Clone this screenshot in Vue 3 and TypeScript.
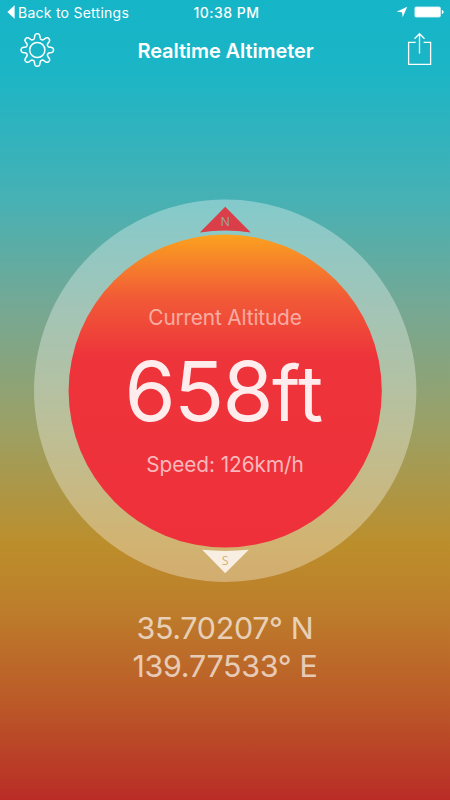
<script setup lang="ts">
const altitude = { value: '658', unit: 'ft' }
const speed = 'Speed: 126km/h'
const coordinates: string[] = ['35.70207° N', '139.77533° E']

// Closed outline of an eight-toothed gear, sampled around the hub.
function gearOutline(cx: number, cy: number): string {
  const points: string[] = []
  for (let i = 0; i < 360; i += 1) {
    const angle = (i * Math.PI) / 180
    const wave = Math.cos(8 * angle)
    const radius = 13.7 + 2.5 * Math.tanh(1.7 * wave) / Math.tanh(1.7)
    points.push(`${(cx + radius * Math.sin(angle)).toFixed(2)} ${(cy - radius * Math.cos(angle)).toFixed(2)}`)
  }
  return `M${points.join('L')}Z`
}
const gear = gearOutline(18.3, 18)
</script>

<template>
  <main class="screen">
    <div class="status">
      <div class="back">
        <svg width="8" height="14" viewBox="0 0 8 14"><path d="M.4 7 7.6.2v13.6z" fill="#fff" /></svg>
        <span class="back-label">Back to Settings</span>
      </div>
      <span class="clock">10:38 PM</span>
      <div class="indicators">
        <svg width="12" height="12" viewBox="0 0 12 12"><path d="M11.3.7 6.7 11.2 6 6.2.6 5.7z" fill="#fff" /></svg>
        <svg width="30" height="12" viewBox="0 0 30 12">
          <rect x=".4" y=".4" width="26.6" height="11.2" rx="2" fill="#fff" fill-opacity=".7" />
          <rect x="1.3" y="1.3" width="24.8" height="9.4" rx="1" fill="#fff" />
          <path d="M27.8 4c2.4.5 2.4 3.5 0 4z" fill="#fff" />
        </svg>
      </div>
    </div>
    <header class="nav">
      <button class="icon" aria-label="Settings">
        <svg width="36" height="36" viewBox="0 0 36 36" fill="none" stroke="#fff" stroke-width="1.5">
          <path :d="gear" />
          <circle cx="18.3" cy="18" r="7.6" />
        </svg>
      </button>
      <h1 class="title">Realtime Altimeter</h1>
      <button class="icon share" aria-label="Share">
        <svg width="26" height="36" viewBox="0 0 26 36" fill="none" stroke="#fff" stroke-width="1.3">
          <path d="M9.7 10.4H2.6v22h22v-22h-7M13.5 21.5V1.8M8.5 6.7l5-5 5 5" />
        </svg>
      </button>
    </header>
    <section class="dial">
      <svg class="face" viewBox="0 0 384 384" width="384" height="384">
        <defs>
          <linearGradient id="heat" x1="0" y1="0" x2="0" y2="1">
            <stop offset="0" stop-color="#fba21f" />
            <stop offset=".2" stop-color="#f15b36" />
            <stop offset=".39" stop-color="#ee343b" />
            <stop offset="1" stop-color="#ee303a" />
          </linearGradient>
        </defs>
        <circle cx="192.2" cy="191.8" r="191.2" fill="#fff" fill-opacity=".33" />
        <circle cx="192.2" cy="192" r="156.6" fill="url(#heat)" />
        <path d="M192.2 7.8 217.8 33.4Q192 29.5 166.8 33.4z" fill="#da3e48" />
        <path d="M169.2 350.8Q192 353 215.8 350.8L192.2 374.3z" fill="#f8efe2" />
        <text class="mark" x="192.2" y="27.4" fill="#a9a2a4">N</text>
        <text class="mark" x="192.2" y="366" fill="#d5b072">S</text>
      </svg>
      <div class="readout">
        <p class="caption">Current Altitude</p>
        <p class="altitude">{{ altitude.value }}<span class="unit">{{ altitude.unit }}</span></p>
        <p class="speed">{{ speed }}</p>
      </div>
    </section>
    <footer class="coordinates">
      <p v-for="line in coordinates" :key="line" class="coordinate">{{ line }}</p>
    </footer>
  </main>
</template>

<style>
body { margin: 0; }
</style>

<style scoped>
.screen {
  width: 450px;
  height: 800px;
  overflow: hidden;
  display: flex;
  flex-direction: column;
  color: #fff;
  font-family: Inter, "Liberation Sans", sans-serif;
  background: linear-gradient(#15b5c8 0, #1bb5c6 70px, #47b1b4 200px, #76a893 310px, #9ca064 430px, #bc8e2b 545px, #bd7d2b 610px, #bb5b28 700px, #b92c26 800px);
}
p, h1 { margin: 0; font-weight: 400; white-space: nowrap; }
.status {
  height: 24px;
  padding: 0 6px 0 7px;
  display: grid;
  grid-template-columns: 1fr auto 1fr;
  align-items: center;
}
.back { display: flex; align-items: center; gap: 3px; }
.back-label { font-size: 14px; letter-spacing: .25px; }
.clock { padding-left: 2px; font-size: 14px; font-weight: 500; letter-spacing: .45px; }
.indicators { display: flex; align-items: center; justify-content: flex-end; gap: 6px; }
.nav {
  height: 52px;
  padding: 0 18px 0 19px;
  display: grid;
  grid-template-columns: 1fr auto 1fr;
  align-items: center;
}
.icon { padding: 0; border: 0; background: none; display: flex; }
.share { justify-self: end; }
.title { padding-top: 2px; font-size: 20px; font-weight: 600; line-height: 24px; letter-spacing: -.1px; }
.dial {
  width: 384px;
  height: 384px;
  margin: 123px 0 0 33px;
  display: grid;
}
.face, .readout { grid-area: 1 / 1; }
.mark { font-family: "Open Sans", sans-serif; font-size: 12.5px; text-anchor: middle; }
.readout { display: flex; flex-direction: column; align-items: center; }
.caption { margin-top: 105px; font-size: 20.8px; line-height: 28px; letter-spacing: -.15px; color: rgba(255, 255, 255, .54); }
.altitude { margin-top: 11px; padding-right: 2px; font-size: 82.5px; line-height: 96px; letter-spacing: -1.6px; color: #ffecec; }
.unit { font-size: 77px; letter-spacing: .3px; }
.speed { margin-top: 10px; font-size: 20.8px; line-height: 28px; letter-spacing: -.07px; color: rgba(255, 255, 255, .66); }
.coordinates { margin-top: 27px; display: flex; flex-direction: column; align-items: center; }
.coordinate { font-size: 30.4px; line-height: 37.5px; letter-spacing: -.3px; color: rgba(255, 255, 255, .68); }
</style>
